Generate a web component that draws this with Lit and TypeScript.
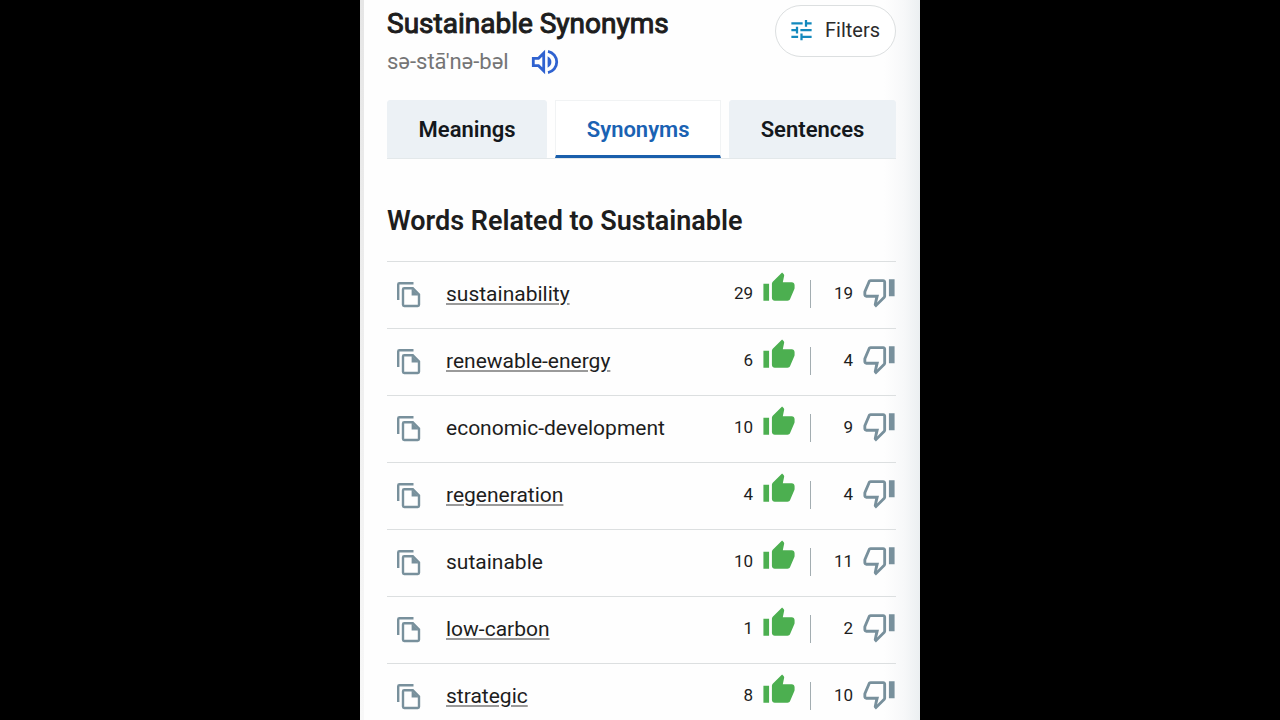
import { LitElement, html, css } from "lit";
import { customElement, property, state } from "lit/decorators.js";

interface Related {
  word: string;
  linked: boolean;
  up: number;
  down: number;
}

const RELATED: Related[] = [
  { word: "sustainability", linked: true, up: 29, down: 19 },
  { word: "renewable-energy", linked: true, up: 6, down: 4 },
  { word: "economic-development", linked: false, up: 10, down: 9 },
  { word: "regeneration", linked: true, up: 4, down: 4 },
  { word: "sutainable", linked: false, up: 10, down: 11 },
  { word: "low-carbon", linked: true, up: 1, down: 2 },
  { word: "strategic", linked: true, up: 8, down: 10 },
];

@customElement("word-row")
export class WordRow extends LitElement {
  @property({ attribute: false }) item!: Related;

  static styles = css`
    :host {
      display: flex;
      align-items: center;
      height: 64px;
      padding-bottom: 2px;
      border-top: 1px solid #dcdfe0;
    }
    button {
      display: flex;
      align-items: center;
      justify-content: flex-end;
      padding: 0;
      border: 0;
      background: none;
      color: #1d1d1d;
      font: 17px/24px Roboto, sans-serif;
      cursor: pointer;
    }
    svg {
      display: block;
    }
    .copy {
      margin-left: 8px;
      color: #78909c;
    }
    .word {
      flex: 1;
      margin-left: 24px;
      color: #1d1d1d;
      font-size: 21px;
      line-height: 28px;
    }
    .word a {
      color: inherit;
      text-decoration: underline 2px #9a9a9a;
      text-underline-offset: 2px;
    }
    .vote {
      gap: 9px;
      margin-bottom: 2px;
    }
    .up svg {
      color: #4caf50;
      margin-bottom: 10px;
    }
    .down {
      width: 72px;
    }
    .down svg {
      color: #78909c;
      margin-bottom: 2px;
    }
    .divider {
      width: 1px;
      height: 28px;
      margin: 0 13px 0 14px;
      background: #a3adb1;
    }
  `;

  render() {
    const { word, linked, up, down } = this.item;
    return html`
      <button class="copy" aria-label="Copy ${word}">
        <svg width="27" height="28" viewBox="0 0 27 28" fill="none" stroke="currentColor" stroke-width="2.4">
          <path d="M3.200 20V4.400Q3.200 3.200 4.400 3.200H18.500" />
          <path d="M9.200 8.200H17.800L24 14.400V24.800Q24 26 22.800 26H9.200Q8 26 8 24.800V9.400Q8 8.200 9.200 8.200Z" />
          <path d="M16.600 8.200L24 15.600H16.600Z" fill="currentColor" stroke="none" />
        </svg>
      </button>
      <span class="word">${linked ? html`<a href="#${word}">${word}</a>` : word}</span>
      <button class="vote up" aria-label="${up} upvotes for ${word}">
        <span>${up}</span>
        <svg width="34" height="34" viewBox="0 0 24 24" fill="currentColor">
          <path d="M1 21h4V9H1v12zm22-11c0-1.1-.9-2-2-2h-6.310l.95-4.570.03-.320c0-.410-.170-.790-.440-1.060L14.170 1 7.590 7.590C7.220 7.950 7 8.450 7 9v10c0 1.100.9 2 2 2h9c.830 0 1.540-.5 1.840-1.220l3.020-7.050c.09-.230.140-.470.140-.730v-2z" />
        </svg>
      </button>
      <span class="divider"></span>
      <button class="vote down" aria-label="${down} downvotes for ${word}">
        <span>${down}</span>
        <svg width="34" height="34" viewBox="0 0 24 24" fill="currentColor">
          <path d="M15 3H6c-.83 0-1.540.5-1.840 1.220l-3.020 7.050c-.09.230-.140.470-.140.730v2c0 1.100.9 2 2 2h6.310l-.950 4.570-.030.320c0 .410.170.790.440 1.060L9.830 23l6.590-6.590c.360-.360.580-.860.580-1.410V5c0-1.100-.9-2-2-2zm0 12l-4.340 4.340L12 14H3v-2l3-7h9v10zm4-12h4v12h-4z" />
        </svg>
      </button>
    `;
  }
}

@customElement("app-root")
export class AppRoot extends LitElement {
  @state() private tab = "Synonyms";

  static styles = css`
    :host {
      display: flex;
      justify-content: center;
      height: 100vh;
      overflow: hidden;
      background: #000;
      color: #1d1d1d;
      font-family: Roboto, sans-serif;
    }
    .page {
      box-sizing: border-box;
      width: 100%;
      max-width: 560px;
      padding: 5px 24px 0 27px;
      background:
        linear-gradient(#e6e6e6, #f8f8f8) left / 4px 100% no-repeat,
        linear-gradient(to left, #ebeff1 0, #f7f8f9 16px, #fefefe 36px);
    }
    button {
      font-family: inherit;
      cursor: pointer;
    }
    svg {
      display: block;
    }
    h1,
    h2 {
      margin: 0;
      line-height: 36px;
    }
    h1 {
      padding-top: 1px;
      font-size: 28px;
      font-weight: 400;
      -webkit-text-stroke: 1px currentColor;
    }
    h2 {
      padding: 44px 0 22px;
      font-size: 27px;
      font-weight: 600;
    }
    .top {
      display: flex;
      justify-content: space-between;
      align-items: flex-start;
    }
    .say {
      display: flex;
      align-items: center;
      gap: 22px;
      margin-top: 2px;
      color: #757575;
      font-size: 22px;
      line-height: 36px;
    }
    .speak {
      padding: 0;
      border: 0;
      background: none;
      color: #2f62d0;
    }
    .filters {
      display: flex;
      align-items: center;
      gap: 10px;
      height: 52px;
      padding: 0 15px 2px 12px;
      border: 1px solid #dcdfe0;
      border-radius: 26px;
      background: #fff;
      color: #2b2b2b;
      font-size: 20px;
    }
    .filters svg {
      color: #1389bd;
    }
    .tabs {
      display: flex;
      gap: 8px;
      margin-top: 20px;
      border-bottom: 1px solid #e3e8ea;
    }
    .tab {
      box-sizing: border-box;
      flex: 1 1 auto;
      height: 58px;
      padding: 0;
      border: 1px solid #ecf1f5;
      border-radius: 3px 3px 0 0;
      background: #ecf1f5;
      color: #14181c;
      font-size: 22px;
      font-weight: 600;
    }
    .tab[aria-selected="true"] {
      padding-top: 2px;
      border-color: #f1f3f4;
      border-bottom: 3px solid #1a5fac;
      border-radius: 0;
      background: #fff;
      color: #1a62b3;
    }
    ul {
      margin: 0;
      padding: 0;
      list-style: none;
    }
  `;

  render() {
    return html`
      <main class="page">
        <header class="top">
          <div>
            <h1>Sustainable Synonyms</h1>
            <div class="say">
              <span>sə-stā'nə-bəl</span>
              <button class="speak" aria-label="Listen">
                <svg width="28" height="28" viewBox="0 0 28 28" fill="none" stroke="currentColor" stroke-width="2.8">
                  <path d="M2.300 10.300H7.500L12.700 5.200V22.800L7.500 17.700H2.300Z" />
                  <path d="M16.600 8.200Q20.400 10.400 20.400 14T16.600 19.800Z" fill="currentColor" stroke="none" />
                  <path d="M17 3.400A10.800 10.800 0 0 1 17 24.600" />
                </svg>
              </button>
            </div>
          </div>
          <button class="filters">
            <svg width="27" height="28" viewBox="0 0 24 24" fill="currentColor">
              <path d="M3 17v2h6v-2H3zM3 5v2h10V5H3zm10 16v-2h8v-2h-8v-2h-2v6h2zM7 9v2H3v2h4v2h2V9H7zm14 4v-2H11v2h10zm-6-4h2V7h4V5h-4V3h-2v6z" />
            </svg>
            Filters
          </button>
        </header>
        <div class="tabs" role="tablist">
          ${["Meanings", "Synonyms", "Sentences"].map(
            (name) => html`<button
              class="tab"
              role="tab"
              aria-selected=${this.tab === name ? "true" : "false"}
              @click=${() => (this.tab = name)}
            >${name}</button>`
          )}
        </div>
        <h2>Words Related to Sustainable</h2>
        <ul>
          ${RELATED.map((item) => html`<li><word-row .item=${item}></word-row></li>`)}
        </ul>
      </main>
    `;
  }
}
